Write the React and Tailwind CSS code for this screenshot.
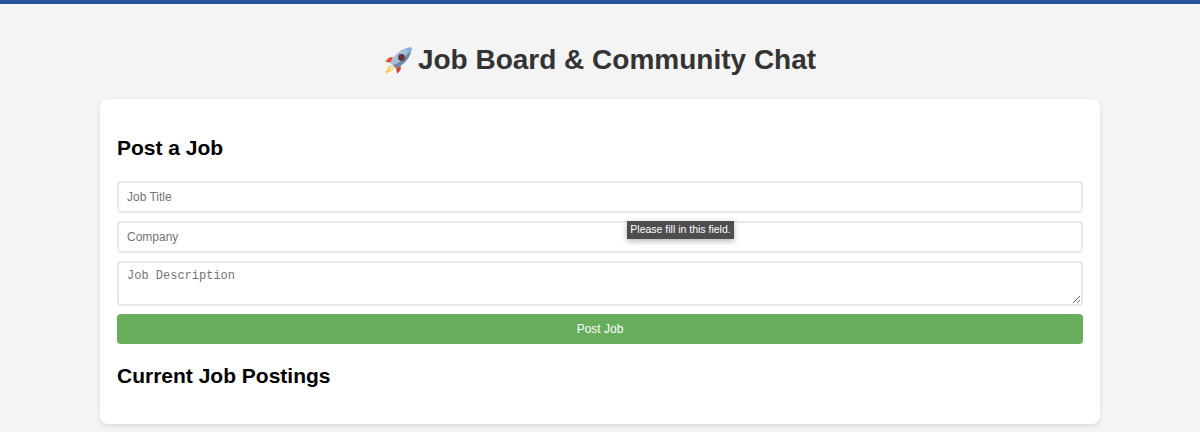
function Rocket() {
  return (
    <svg width="29" height="29" viewBox="0 0 29 29" className="shrink-0">
      {/* flame */}
      <path d="M7 19 C4 21 2 25 1.500 27.500 C4 27 8 25 10 22 Z" fill="#f6c945" />
      <path d="M7.500 20 C6 22 5 24 4.500 25 C6 24.500 8 23.500 9.500 21.500 Z" fill="#fdf0b0" />
      {/* fins */}
      <path d="M9 11 C6 10.500 3 12.500 1.500 16 L7 16.500 Z" fill="#e2503f" />
      <path d="M16.500 20 C17.500 23 16 26 13 27.500 L12 21.500 Z" fill="#d8412f" />
      {/* body */}
      <path d="M27.500 1.500 C21 1.500 14 5 9.500 11.500 C8 13.500 7 15.500 6.500 17 L11.500 22 C13.500 21.500 15.500 20.500 17.500 19 C24 14.500 27.500 8 27.500 1.500 Z" fill="#a9bdd3" />
      <path d="M27.500 1.500 C27.500 8 24 14.500 17.500 19 C15.500 20.500 13.500 21.500 11.500 22 L9 19.500 C17 16 23 10 27.500 1.500 Z" fill="#6f87a6" />
      <path d="M27.500 1.500 C25 1.500 23 2 21 2.800 C23 4 25 6 26.200 8 C27 6 27.500 4 27.500 1.500 Z" fill="#7fb2e0" />
      {/* window */}
      <circle cx="17.500" cy="11.500" r="3.400" fill="#3b4656" />
      <circle cx="17.500" cy="11.500" r="2.200" fill="#7a2f2a" />
    </svg>
  );
}

export default function App() {
  return (
    <div className="h-[432px] overflow-hidden bg-[#f4f4f4] font-['Liberation_Sans',Arial,sans-serif]">
      <div className="h-1 bg-[#2a5298]" />
      <h1 className="mt-[39px] flex h-[34px] items-center justify-center gap-[5px] text-[28px] leading-[34px] font-bold text-[#333]">
        <Rocket />
        Job Board &amp; Community Chat
      </h1>
      <div className="relative mx-auto mt-[22px] h-[325px] w-[1000px] rounded-lg bg-white px-[17px] shadow-[0_2px_5px_rgba(0,0,0,0.1)]">
        <h2 className="pt-[36px] text-[21px] leading-[26px] font-bold text-black">Post a Job</h2>
        <form className="mt-[20px] flex flex-col">
          <input
            type="text"
            placeholder="Job Title"
            className="h-[32px] rounded border-2 border-[#e8e8e8] px-2 text-[12px] outline-none placeholder:text-[#757575]"
          />
          <input
            type="text"
            placeholder="Company"
            className="mt-2 h-[32px] rounded border-2 border-[#e8e8e8] px-2 text-[12px] outline-none placeholder:text-[#757575]"
          />
          <textarea
            placeholder="Job Description"
            className="mt-2 h-[45px] rounded border-2 border-[#e8e8e8] px-2 py-[6px] font-['Liberation_Mono',monospace] text-[12px] leading-[15px] outline-none placeholder:text-[#757575]"
          />
          <button
            type="button"
            className="mt-2 h-[30px] rounded bg-[#67ad5b] text-center text-[12px] text-white"
          >
            Post Job
          </button>
        </form>
        <h2 className="mt-[19px] text-[21px] leading-[26px] font-bold text-black">Current Job Postings</h2>

        {/* browser validation bubble */}
        <div className="absolute top-[122px] left-[527px] flex h-[18px] w-[107px] items-center justify-center bg-[#4d4d4d] text-[10.500px] text-white shadow-[0_2px_6px_rgba(0,0,0,0.3)]">
          Please fill in this field.
        </div>
      </div>
    </div>
  );
}
